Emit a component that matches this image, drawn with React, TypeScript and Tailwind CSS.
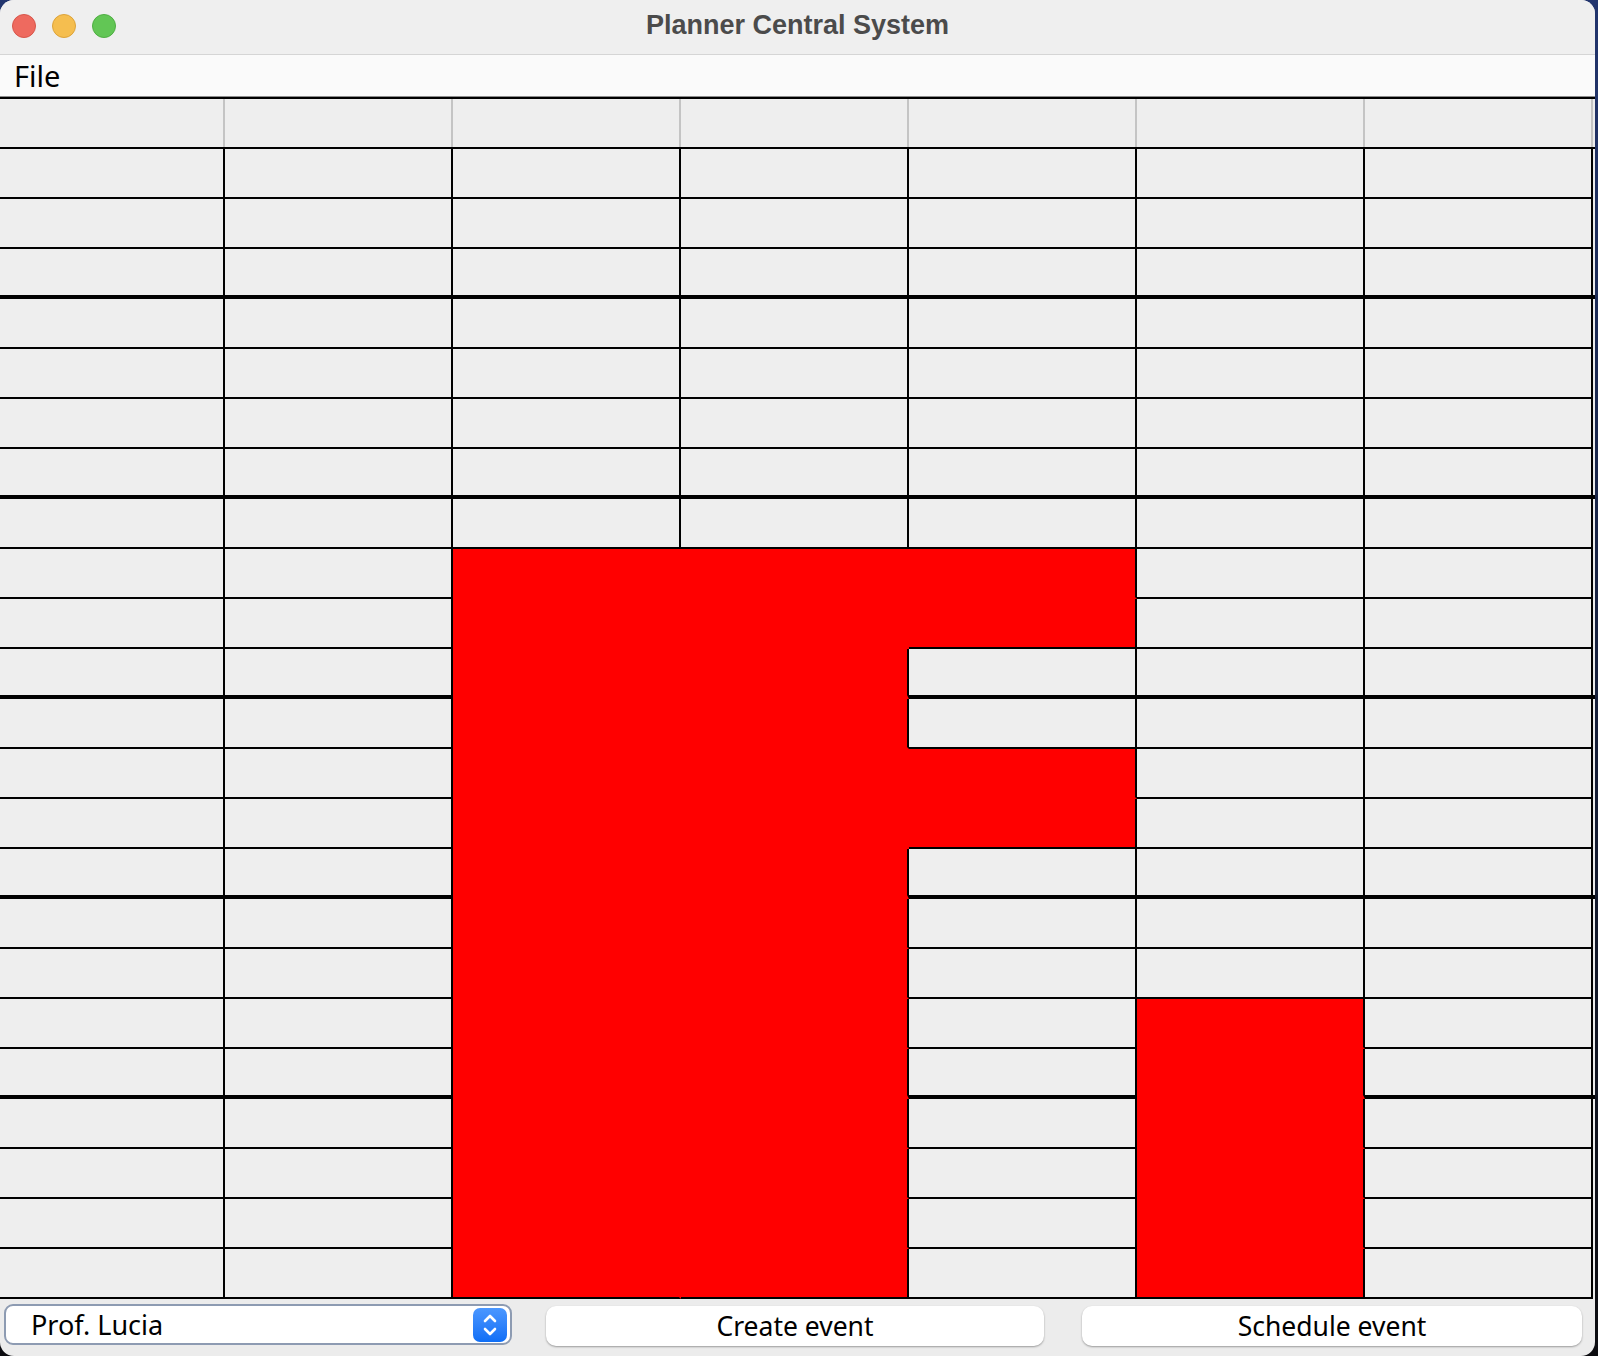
import React from "react";

const COLS = 7;
const ROWS = 23;

// event blocks: [col, rowStart, rowEnd] (inclusive)
const events: [number, number, number][] = [
  [2, 8, 22],
  [3, 8, 22],
  [4, 8, 9],
  [4, 12, 13],
  [5, 17, 22],
];

const isBusy = (c: number, r: number) =>
  events.some(([col, a, b]) => col === c && r >= a && r <= b);

const isThick = (r: number) => r % 4 === 2 && r < ROWS - 1;

const widths = ["w-[225px]", "w-[228px]", "w-[228px]", "w-[228px]", "w-[228px]", "w-[228px]", "w-[228px]"];

const Cell: React.FC<{ c: number; r: number }> = ({ c, r }) => {
  const busy = isBusy(c, r);
  const rightRed = busy && c < COLS - 1 && isBusy(c + 1, r);
  const downRed = busy && r < ROWS - 1 && isBusy(c, r + 1);
  return (
    <div
      className={[
        "h-[50px] shrink-0 box-border border-r-2",
        widths[c],
        isThick(r) ? "border-b-4" : "border-b-2",
        busy ? "bg-[#ff0000]" : "bg-[#eeeeee]",
        rightRed ? "border-r-[#ff0000]" : "border-r-black",
        downRed ? "border-b-[#ff0000]" : "border-b-black",
      ].join(" ")}
    />
  );
};

const TrafficLight: React.FC<{ color: string }> = ({ color }) => (
  <div className={`w-[24px] h-[24px] rounded-full ${color}`} />
);

export default function App() {
  return (
    <div className="w-[1598px] h-[1356px] bg-gradient-to-b from-[#22356e] to-[#0c0c10]">
      <div
        className="w-[1595px] h-[1356px] rounded-[14px] overflow-hidden bg-[#ececec] flex flex-col"
        style={{ fontFamily: '"Noto Sans", "DejaVu Sans", sans-serif' }}
      >
        {/* title bar */}
        <div className="h-[55px] shrink-0 bg-[#efefef] border-b border-[#d5d5d5] relative flex items-center justify-center">
          <div className="absolute left-[12px] top-[14px] flex gap-[16px]">
            <TrafficLight color="bg-[#ee6a5f] border border-[#d7564b]" />
            <TrafficLight color="bg-[#f5be4f] border border-[#dca33a]" />
            <TrafficLight color="bg-[#62c655] border border-[#4fae43]" />
          </div>
          <span
            className="text-[27px] font-bold text-[#4b4b4b] leading-none -mt-[4px]"
            style={{ fontFamily: '"Liberation Sans", Arial, sans-serif' }}
          >
            Planner Central System
          </span>
        </div>

        {/* menu bar */}
        <div className="h-[42px] shrink-0 bg-[#fafafa] border-b border-[#8c8c8c] flex items-center pl-[14px]">
          <span className="text-[29px] text-black leading-none">File</span>
        </div>

        {/* table */}
        <div className="w-[1595px] border-t-2 border-black">
          <div className="flex h-[50px] border-b-2 border-black">
            {Array.from({ length: COLS }).map((_, c) => (
              <div
                key={c}
                className={`${widths[c]} shrink-0 h-full bg-[#eeeeee] border-r-2 border-[#c4c4c4] box-border`}
              />
            ))}
          </div>
          {Array.from({ length: ROWS }).map((_, r) => (
            <div key={r} className="flex">
              {Array.from({ length: COLS }).map((_, c) => (
                <Cell key={c} c={c} r={r} />
              ))}
              <div
                className={`h-[50px] flex-1 box-border ${
                  isThick(r) ? "border-b-4 border-black" : ""
                }`}
              />
            </div>
          ))}
        </div>

        {/* bottom controls */}
        <div className="flex items-start pt-[5px] pl-[4px]">
          <div className="w-[508px] h-[41px] rounded-[9px] border-2 border-[#8d9bb2] bg-white flex items-center justify-between pl-[25px] pr-[3px]">
            <span className="text-[27px] text-black leading-none">Prof. Lucia</span>
            <div className="w-[34px] h-[34px] rounded-[7px] bg-gradient-to-b from-[#4a97ff] to-[#0d6ef6] flex items-center justify-center">
              <svg width="16" height="26" viewBox="0 0 16 26" fill="none" stroke="white" strokeWidth="2.6" strokeLinecap="round" strokeLinejoin="round">
                <path d="M3 9 L8 4 L13 9" />
                <path d="M3 17 L8 22 L13 17" />
              </svg>
            </div>
          </div>
          <button className="ml-[34px] mt-[2px] w-[498px] h-[40px] rounded-[10px] bg-white shadow-[0_1px_2px_rgba(0,0,0,0.35)] text-[26.5px] text-black leading-none">
            Create event
          </button>
          <button className="ml-[38px] mt-[2px] w-[500px] h-[40px] rounded-[10px] bg-white shadow-[0_1px_2px_rgba(0,0,0,0.35)] text-[26.5px] text-black leading-none">
            Schedule event
          </button>
        </div>
      </div>
    </div>
  );
}
